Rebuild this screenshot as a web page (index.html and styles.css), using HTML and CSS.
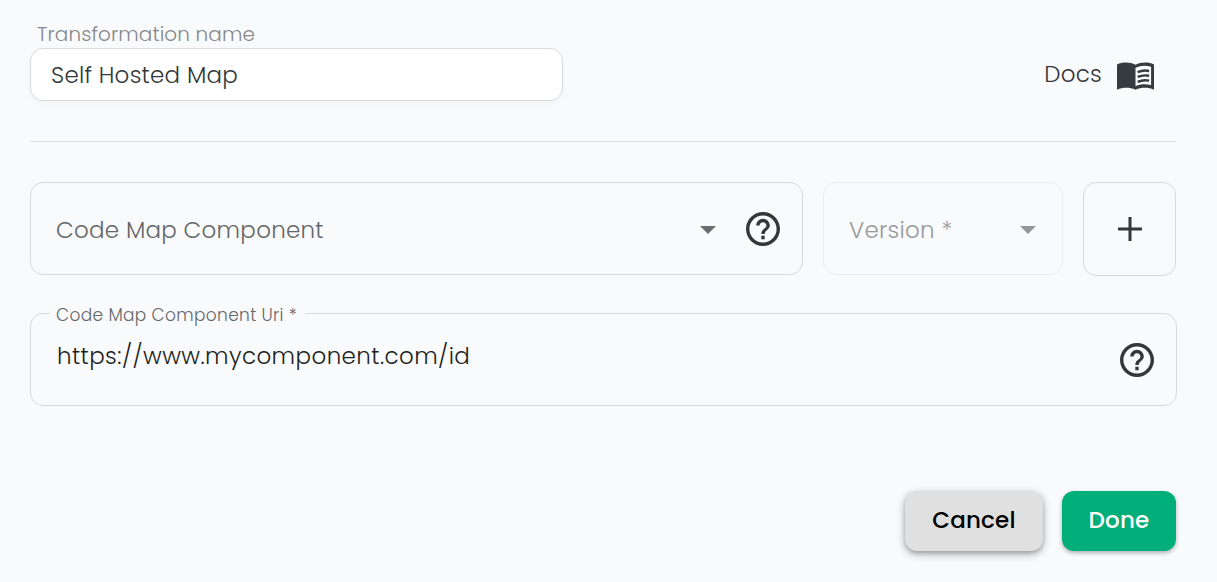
FILE: index.html
```html
<!DOCTYPE html>
<html lang="en">
<head>
<meta charset="utf-8">
<title>Transformation</title>
<link rel="stylesheet" href="styles.css">
</head>
<body>
<main class="form">
  <header class="head">
    <div class="name-field">
      <label class="name-label" for="name"><span class="t-name">Transformation name</span></label>
      <div class="name-box" id="name"><span class="t-self">Self Hosted Map</span></div>
    </div>
    <a class="docs"><span class="t-docs">Docs</span>
      <svg class="book" viewBox="0 0 38 28"><path fill="#363b3f" fill-rule="evenodd" d="M0 2.200C5.500-.5 13.500-.5 19 2.500C24.500-.5 32.500-.5 38 2.200V28C32 25.500 25 25.500 19 28C13 25.500 6 25.500 0 28ZM19 5.500V24.500C24 22.300 30 22 35 23.500V4.500C30 2.700 24 3 19 5.500Z"/><path fill="none" stroke="#363b3f" stroke-width="2.500" d="M21.200 10Q27 7.500 33 8.800M21.200 15Q27 12.500 33 13.800M21.200 20Q27 17.500 33 18.800"/></svg>
    </a>
  </header>
  <div class="row">
    <div class="box select"><span class="t-code">Code Map Component</span>
      <svg class="caret" viewBox="0 0 16 8"><path d="M0 0h16L8 8z" fill="#6b6d6f"/></svg>
      <svg class="help" viewBox="2 2 20 20"><path fill="#33373a" d="M11 18h2v-2h-2v2zm1-16C6.480 2 2 6.480 2 12s4.480 10 10 10 10-4.480 10-10S17.520 2 12 2zm0 18c-4.410 0-8-3.590-8-8s3.590-8 8-8 8 3.590 8 8-3.590 8-8 8zm0-14c-2.210 0-4 1.790-4 4h2c0-1.100.9-2 2-2s2 .9 2 2c0 2-3 1.750-3 5h2c0-2.250 3-2.500 3-5 0-2.210-1.790-4-4-4z"/></svg>
    </div>
    <div class="box version"><span class="t-version">Version *</span>
      <svg class="caret" viewBox="0 0 16 8"><path d="M0 0h16L8 8z" fill="#949698"/></svg>
    </div>
    <div class="box add"><svg class="plus" viewBox="0 0 24 24"><path d="M12 0v24M0 12h24" stroke="#33373a" stroke-width="3"/></svg></div>
  </div>
  <fieldset class="uri">
    <legend><span class="t-uri">Code Map Component Uri *</span></legend>
    <div class="uri-row"><span class="t-url">https://www.mycomponent.com/id</span>
      <svg class="help" viewBox="2 2 20 20"><path fill="#33373a" d="M11 18h2v-2h-2v2zm1-16C6.480 2 2 6.480 2 12s4.480 10 10 10 10-4.480 10-10S17.520 2 12 2zm0 18c-4.410 0-8-3.590-8-8s3.590-8 8-8 8 3.590 8 8-3.590 8-8 8zm0-14c-2.210 0-4 1.790-4 4h2c0-1.100.9-2 2-2s2 .9 2 2c0 2-3 1.750-3 5h2c0-2.250 3-2.500 3-5 0-2.210-1.790-4-4-4z"/></svg>
    </div>
  </fieldset>
  <footer class="actions">
    <button class="btn cancel"><span class="t-cancel">Cancel</span></button>
    <button class="btn done"><span class="t-done">Done</span></button>
  </footer>
</main>
</body>
</html>
```

FILE: styles.css
```css
* { box-sizing: border-box; }
body { margin: 0; background: #f9fafc; font-family: Poppins, Inter, sans-serif; font-weight: 300; font-size: 23px; letter-spacing: .25px; color: #333739; }
svg { display: block; flex: none; }
span { white-space: nowrap; }
.form { height: 582px; padding: 20px 41px 0 30px; }
.head { display: flex; justify-content: space-between; height: 122px; border-bottom: 1px solid #dcdee0; }
.name-field { width: 533px; }
.name-label { display: block; height: 28px; padding-left: 7px; font-size: 20px; letter-spacing: .09px; line-height: 28px; color: #85878a; }
.name-box { height: 53px; padding-left: 20px; line-height: 53px; border: 1px solid #d7d9db; border-radius: 13px; background: #fff; box-shadow: 0 4px 8px rgba(0,0,0,.025); }
.docs { display: flex; height: 28px; margin: 42px 22px 0 0; gap: 15px; line-height: 25px; }
.book { width: 37px; height: 28px; }
.row { display: flex; gap: 20px; margin-top: 40px; height: 94px; }
.box { display: flex; align-items: center; height: 93px; border: 1px solid #d7d9db; border-radius: 13px; }
.t-code, .t-version { padding-top: 2px; }
.select .caret, .version .caret { position: relative; top: 1px; }
.select { width: 773px; padding: 0 22px 0 25px; color: #646668; }
.select .caret { margin-left: auto; }
.select .help { margin-left: 30px; }
.caret { width: 16px; height: 8px; }
.help { width: 34px; height: 34px; }
.version { width: 240px; padding: 0 26px 0 25px; justify-content: space-between; color: #97999b; border-color: #e9ebed; }
.add { width: 93px; height: 94px; justify-content: center; }
.plus { width: 24px; height: 24px; }
.uri { width: 1147px; height: 103px; margin: 27px 0 0; padding: 0 22px 0 19px; border: 1px solid #d7d9db; border-radius: 13px; }
.uri legend { height: 20px; padding: 0 6px; width: 255px; font-size: 17px; letter-spacing: .33px; line-height: 24px; color: #646668; }
.uri-row { display: flex; justify-content: space-between; padding: 20px 0 0 7px; line-height: 26px; letter-spacing: .41px; color: #1c1e20; }
.actions { display: flex; justify-content: flex-end; gap: 19px; margin-top: 85px; }
.btn { height: 60px; padding: 0 0 2px; border: 0; border-radius: 12px; font: inherit; font-weight: 500; letter-spacing: .2px; }
.cancel { width: 138px; color: #000; background: #e0e0e0; box-shadow: 0 3px 8px rgba(0,0,0,.3), 0 2px 4px rgba(0,0,0,.16); }
.done { width: 114px; color: #fff; background: #00ae7a; box-shadow: 0 2px 4px rgba(0,0,0,.3); }
```
